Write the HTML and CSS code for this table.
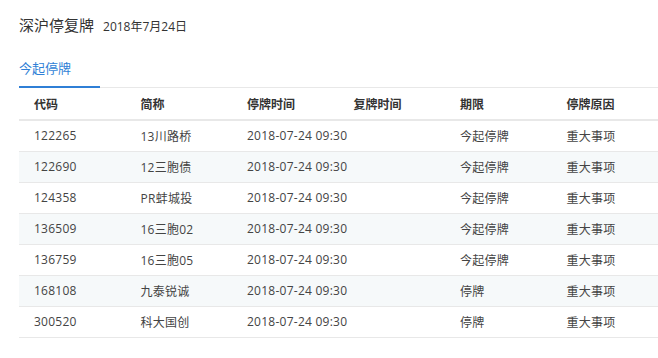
FILE: index.html
```html
<!DOCTYPE html>
<html lang="zh-CN">
<head>
<meta charset="utf-8">
<link rel="stylesheet" href="styles.css">
</head>
<body>
<div class="page">
  <div class="title-row">
    <span class="title">深沪停复牌</span>
    <span class="date">2018年7月24日</span>
  </div>
  <div class="tabs">
    <div class="tab active">今起停牌</div>
  </div>
  <table class="grid">
    <thead>
      <tr><th>代码</th><th>简称</th><th>停牌时间</th><th>复牌时间</th><th>期限</th><th>停牌原因</th></tr>
    </thead>
    <tbody>
      <tr><td>122265</td><td>13川路桥</td><td>2018-07-24 09:30</td><td></td><td>今起停牌</td><td>重大事项</td></tr>
      <tr><td>122690</td><td>12三胞债</td><td>2018-07-24 09:30</td><td></td><td>今起停牌</td><td>重大事项</td></tr>
      <tr><td>124358</td><td>PR蚌城投</td><td>2018-07-24 09:30</td><td></td><td>今起停牌</td><td>重大事项</td></tr>
      <tr><td>136509</td><td>16三胞02</td><td>2018-07-24 09:30</td><td></td><td>今起停牌</td><td>重大事项</td></tr>
      <tr><td>136759</td><td>16三胞05</td><td>2018-07-24 09:30</td><td></td><td>今起停牌</td><td>重大事项</td></tr>
      <tr><td>168108</td><td>九泰锐诚</td><td>2018-07-24 09:30</td><td></td><td>停牌</td><td>重大事项</td></tr>
      <tr><td>300520</td><td>科大国创</td><td>2018-07-24 09:30</td><td></td><td>停牌</td><td>重大事项</td></tr>
    </tbody>
  </table>
</div>
</body>
</html>
```

FILE: styles.css
```css
* { box-sizing: border-box; }
html, body { margin: 0; padding: 0; background: #fff; }
body {
  font-family: "Open Sans", "Noto Sans CJK SC", sans-serif;
  color: #333;
  font-size: 12px;
}
.page { padding: 14px 0 0 19px; }
.title-row {
  display: flex;
  align-items: baseline;
  height: 22px;
}
.title { font-size: 15px; color: #333; margin-right: 9px; }
.date { font-size: 12px; color: #333; }
.tabs {
  margin-top: 20px;
  display: flex;
  border-bottom: 1px solid #e8e8e8;
}
.tab {
  width: 81px;
  height: 32px;
  font-size: 13px;
  line-height: 24px;
  color: #2f7fd6;
  border-bottom: 2px solid #2f7fd6;
  margin-bottom: -1px;
}
.grid {
  width: 639px;
  border-collapse: collapse;
  table-layout: fixed;
}
.grid th, .grid td {
  text-align: left;
  padding: 0 0 0 15px;
  white-space: nowrap;
}
.grid th {
  height: 32px;
  font-weight: 600;
  color: #333;
  border-bottom: 2px solid #e8e8e8;
}
.grid td {
  height: 31px;
  color: #444;
  letter-spacing: 0.25px;
  border-bottom: 1px solid #e8e8e8;
}
.grid tbody tr:nth-child(even) td { background: #f6f9fa; }
```
